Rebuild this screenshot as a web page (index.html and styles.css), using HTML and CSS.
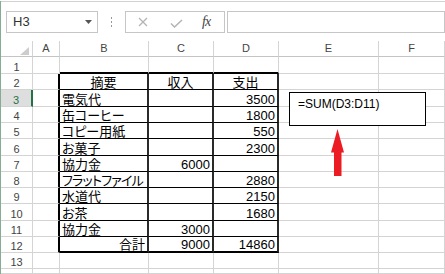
FILE: index.html
```html
<!DOCTYPE html>
<html lang="ja">
<head>
<meta charset="utf-8">
<title>Excel SUM</title>
<link rel="stylesheet" href="styles.css">
</head>
<body>
<div class="app">
  <div class="topbar">
    <div class="namebox"><span class="nb-text">H3</span><svg class="nb-arrow" width="7" height="4" viewBox="0 0 7 4"><polygon points="0,0 7,0 3.5,4" fill="#555"/></svg></div>
    <svg class="grip" width="3" height="11" viewBox="0 0 3 11"><rect x="1" y="0" width="1" height="2" fill="#999"/><rect x="1" y="4" width="1" height="2" fill="#999"/><rect x="1" y="8" width="1" height="2" fill="#999"/></svg>
    <div class="btns">
      <svg class="ic-x" width="10" height="10" viewBox="0 0 10 10"><path d="M1 1 L9 9 M9 1 L1 9" stroke="#b4b4b4" stroke-width="1.3" fill="none"/></svg>
      <svg class="ic-ok" width="13" height="9" viewBox="0 0 13 9"><path d="M1 4.5 L4.5 8 L12 1" stroke="#b4b4b4" stroke-width="1.5" fill="none"/></svg>
      <span class="ic-fx">fx</span>
    </div>
    <div class="fbar"></div>
  </div>
  <div class="sheet">
    <div class="c h corner"><svg width="9" height="8" viewBox="0 0 9 8"><polygon points="9,0 9,8 0,8" fill="#cdcdcd"/></svg></div>
    <div class="c h">A</div><div class="c h">B</div><div class="c h">C</div><div class="c h">D</div><div class="c h">E</div><div class="c h">F</div>

    <div class="c rh"><span>1</span></div><div class="c"></div><div class="c tt"></div><div class="c tt"></div><div class="c tt"></div><div class="c"></div><div class="c"></div>

    <div class="c rh"><span>2</span></div><div class="c tl"></div><div class="c t tv ctr"><span>摘要</span></div><div class="c t tv ctr"><span>収入</span></div><div class="c t tv ctr"><span>支出</span></div><div class="c"></div><div class="c"></div>

    <div class="c rh sel"><span>3</span></div><div class="c tl"></div><div class="c t tv"><span>電気代</span></div><div class="c t tv"></div><div class="c t tv r"><span>3500</span></div><div class="c"></div><div class="c"></div>

    <div class="c rh"><span>4</span></div><div class="c tl"></div><div class="c t tv"><span>缶コーヒー</span></div><div class="c t tv"></div><div class="c t tv r"><span>1800</span></div><div class="c"></div><div class="c"></div>

    <div class="c rh"><span>5</span></div><div class="c tl"></div><div class="c t tv"><span>コピー用紙</span></div><div class="c t tv"></div><div class="c t tv r"><span>550</span></div><div class="c"></div><div class="c"></div>

    <div class="c rh"><span>6</span></div><div class="c tl"></div><div class="c t tv"><span>お菓子</span></div><div class="c t tv"></div><div class="c t tv r"><span>2300</span></div><div class="c"></div><div class="c"></div>

    <div class="c rh"><span>7</span></div><div class="c tl"></div><div class="c t tv"><span>協力金</span></div><div class="c t tv r"><span>6000</span></div><div class="c t tv"></div><div class="c"></div><div class="c"></div>

    <div class="c rh"><span>8</span></div><div class="c tl"></div><div class="c t tv"><span class="narrow">フラットファイル</span></div><div class="c t tv"></div><div class="c t tv r"><span>2880</span></div><div class="c"></div><div class="c"></div>

    <div class="c rh"><span>9</span></div><div class="c tl"></div><div class="c t tv"><span>水道代</span></div><div class="c t tv"></div><div class="c t tv r"><span>2150</span></div><div class="c"></div><div class="c"></div>

    <div class="c rh"><span>10</span></div><div class="c tl"></div><div class="c t tv"><span>お茶</span></div><div class="c t tv"></div><div class="c t tv r"><span>1680</span></div><div class="c"></div><div class="c"></div>

    <div class="c rh"><span>11</span></div><div class="c tl"></div><div class="c t tv"><span>協力金</span></div><div class="c t tv r"><span>3000</span></div><div class="c t tv"></div><div class="c"></div><div class="c"></div>

    <div class="c rh"><span>12</span></div><div class="c tl"></div><div class="c t tv tb r"><span>合計</span></div><div class="c t tv tb r"><span>9000</span></div><div class="c t tv tb r"><span>14860</span></div><div class="c"></div><div class="c"></div>

    <div class="c rh"><span>13</span></div><div class="c"></div><div class="c"></div><div class="c"></div><div class="c"></div><div class="c"></div><div class="c"></div>

    <div class="c rh"></div><div class="c"></div><div class="c"></div><div class="c"></div><div class="c"></div><div class="c"></div><div class="c"></div>

    <div class="formula-box">=SUM(D3:D11)</div>
    <svg class="arrow" width="13" height="47" viewBox="0 0 13 47"><polygon points="6.5,0 13,23.5 10.5,23.5 10.5,47 3,47 3,23.5 0,23.5" fill="#ec1c24"/></svg>
  </div>
</div>
</body>
</html>
```

FILE: styles.css
```css
html, body {
  margin: 0;
  padding: 0;
  background: #ffffff;
}
body {
  width: 445px;
  height: 274px;
  overflow: hidden;
  font-family: "Liberation Sans", "Noto Sans CJK JP", sans-serif;
}
.app {
  border-left: 1px solid #86ad94;
  height: 274px;
  box-sizing: border-box;
}
.topbar {
  margin-top: 1px;
  border-top: 1px solid #d2d2d2;
  height: 40px;
  box-sizing: border-box;
  padding-top: 9px;
  display: flex;
  align-items: flex-start;
}
.namebox {
  margin-left: 5px;
  width: 92px;
  height: 22px;
  box-sizing: border-box;
  border: 1px solid #c6c6c6;
  display: flex;
  align-items: center;
  justify-content: space-between;
  padding: 0 5px 0 6px;
}
.nb-text {
  font-size: 13px;
  color: #333;
  line-height: 14px;
}
.nb-arrow {
  display: block;
  margin-bottom: 1px;
}
.grip {
  display: block;
  margin-left: 12px;
  margin-top: 6px;
}
.btns {
  margin-left: 12px;
  width: 100px;
  height: 22px;
  box-sizing: border-box;
  border: 1px solid #c6c6c6;
  display: flex;
  align-items: center;
  padding-left: 12px;
}
.ic-x {
  display: block;
}
.ic-ok {
  display: block;
  margin-left: 22px;
  margin-top: 3px;
}
.ic-fx {
  margin-left: 19px;
  font-family: "Liberation Serif", serif;
  font-style: italic;
  font-size: 14px;
  color: #444;
  line-height: 14px;
  letter-spacing: -1px;
}
.fbar {
  margin-left: 2px;
  flex: 1;
  height: 22px;
  box-sizing: border-box;
  border: 1px solid #c6c6c6;
}

.sheet {
  position: relative;
  height: 233px;
  display: grid;
  grid-template-columns: 32px 27px 89px 65px 65px 100px 1fr;
  grid-template-rows: 16px 17px 16px 17px 16px 16px 17px 16px 16px 16px 17px 16px 16px 16px 1fr;
}
.c {
  box-sizing: border-box;
  border-right: 1px solid #d4d4d4;
  border-bottom: 1px solid #d4d4d4;
  display: flex;
  align-items: flex-end;
  padding: 0 2px;
  white-space: nowrap;
  font-size: 13px;
  color: #000;
  font-feature-settings: "palt";
}
.c span {
  line-height: 12px;
}
.c .narrow {
  letter-spacing: -0.8px;
}
.h {
  justify-content: center;
  align-items: center;
  font-size: 11px;
  color: #444;
  line-height: 15px;
  border-bottom-color: #c4c4c4;
}
.corner {
  justify-content: flex-end;
  align-items: flex-end;
  padding: 0 3px 1px 0;
}
.corner svg {
  display: block;
}
.rh {
  justify-content: center;
  font-size: 11px;
  color: #444;
}
.rh span {
  line-height: 12px;
}
.sel {
  background: #dedede;
  color: #217346;
  border-right: 2px solid #217346;
}
.tt {
  border-bottom: 2px solid #000;
}
.tl {
  border-right: 2px solid #000;
}
.t {
  border-bottom: 1px solid #000;
}
.tv {
  border-right: 2px solid #2a2a2a;
}
.tb {
  border-bottom: 2px solid #000;
}
.r {
  justify-content: flex-end;
}
.ctr {
  justify-content: center;
}
.formula-box {
  position: absolute;
  left: 288px;
  top: 51px;
  width: 137px;
  height: 34px;
  box-sizing: border-box;
  border: 1px solid #000;
  background: #fff;
  font-size: 12px;
  line-height: 14px;
  padding: 4px 0 0 8px;
  color: #000;
}
.arrow {
  position: absolute;
  left: 330px;
  top: 88px;
  display: block;
}
```
